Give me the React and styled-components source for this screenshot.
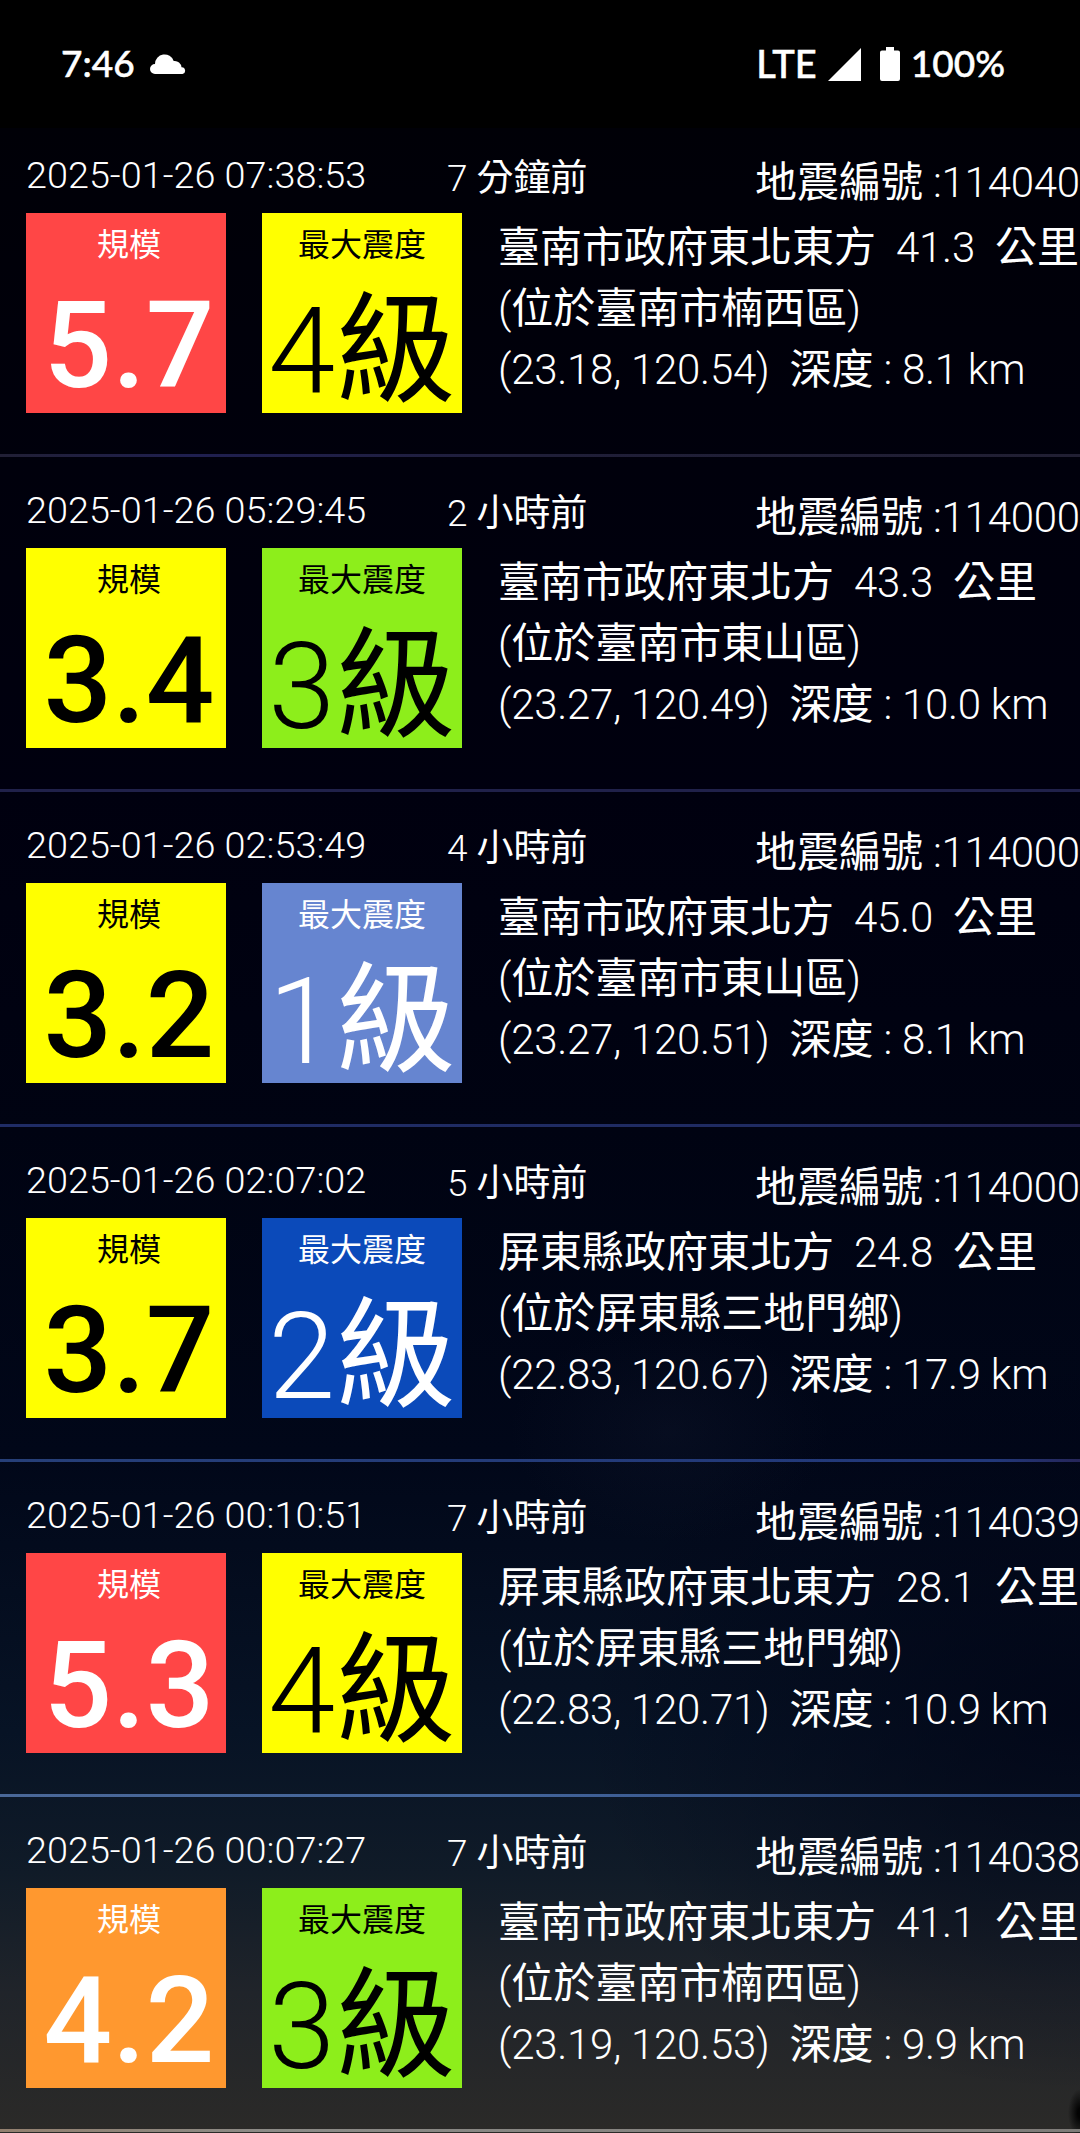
import React from "react";
import styled, { createGlobalStyle } from "styled-components";

const quakes = [
    { time: "2025-01-26 07:38:53", ago: "7 分鐘前", id: "114040", mag: "5.7", magBg: "#ff4646", magColor: "#fff", level: "4級", levelBg: "#ffff00", levelColor: "#000", place: "臺南市政府東北東方  41.3  公里", town: "(位於臺南市楠西區)", coords: "(23.18, 120.54)  深度 : 8.1 km", line: "linear-gradient(90deg, #211f35, #1f1f50 18%, #1f1e38 50%, #211f33)" },
    { time: "2025-01-26 05:29:45", ago: "2 小時前", id: "114000", mag: "3.4", magBg: "#ffff00", magColor: "#000", level: "3級", levelBg: "#8dee1b", levelColor: "#000", place: "臺南市政府東北方  43.3  公里", town: "(位於臺南市東山區)", coords: "(23.27, 120.49)  深度 : 10.0 km", line: "#20214a" },
    { time: "2025-01-26 02:53:49", ago: "4 小時前", id: "114000", mag: "3.2", magBg: "#ffff00", magColor: "#000", level: "1級", levelBg: "#6685d0", levelColor: "#fff", place: "臺南市政府東北方  45.0  公里", town: "(位於臺南市東山區)", coords: "(23.27, 120.51)  深度 : 8.1 km", line: "linear-gradient(90deg, #1f2c66, #1f2b62 70%, #211f4a)" },
    { time: "2025-01-26 02:07:02", ago: "5 小時前", id: "114000", mag: "3.7", magBg: "#ffff00", magColor: "#000", level: "2級", levelBg: "#0b4aba", levelColor: "#fff", place: "屏東縣政府東北方  24.8  公里", town: "(位於屏東縣三地門鄉)", coords: "(22.83, 120.67)  深度 : 17.9 km", line: "linear-gradient(90deg, #263f78, #22387a 92%, #26265a)" },
    { time: "2025-01-26 00:10:51", ago: "7 小時前", id: "114039", mag: "5.3", magBg: "#ff4646", magColor: "#fff", level: "4級", levelBg: "#ffff00", levelColor: "#000", place: "屏東縣政府東北東方  28.1  公里", town: "(位於屏東縣三地門鄉)", coords: "(22.83, 120.71)  深度 : 10.9 km", line: "linear-gradient(90deg, #4a6898, #43659b 45%, #2c4880)" },
    { time: "2025-01-26 00:07:27", ago: "7 小時前", id: "114038", mag: "4.2", magBg: "#ff982f", magColor: "#fff", level: "3級", levelBg: "#8dee1b", levelColor: "#000", place: "臺南市政府東北東方  41.1  公里", town: "(位於臺南市楠西區)", coords: "(23.19, 120.53)  深度 : 9.9 km", line: "linear-gradient(90deg, #93806f, #8c8b87 25%, #7f7c79)" },
];

const GlobalStyle = createGlobalStyle`
    body {
        margin: 0;
        background: #000;
    }
`

const Screen = styled.div`
    width: 1080px;
    height: 2133px;
    overflow: hidden;
    display: flex;
    flex-direction: column;
    background: #000;
    color: #fff;
    font-family: Roboto, "Noto Sans CJK TC", sans-serif;
    font-weight: 300;
`
const StatusBar = styled.div`
    height: 126px;
    flex: none;
    box-sizing: border-box;
    padding: 0 75px 0 61px;
    margin-bottom: 2px;
    display: flex;
    align-items: center;
    font-family: Lato, sans-serif;
    font-size: 37px;
    font-weight: 500;
    line-height: 126px;
    -webkit-text-stroke: 0.5px #fff;
`
const Clock = styled.div`
    width: 89px;
`
const Network = styled.div`
    margin-left: auto;
    margin-right: 11px;
    font-size: 38px;
`
const Icon = styled.svg`
    display: block;
    flex: none;
    fill: #fff;
    margin-top: 2px;
    margin-right: ${props => props.$gap || 0}px;
`
const List = styled.div`
    height: 2005px;
    flex: none;
    background:
        radial-gradient(ellipse 12px 24px at 100% 99%, #030303 20%, transparent),
        radial-gradient(ellipse 500px 380px at 100% 79%, rgba(0, 3, 20, 0.75), transparent),
        radial-gradient(ellipse 160px 110px at 62% 65%, rgba(40, 50, 75, 0.14), transparent),
        linear-gradient(180deg, #000007 0%, #00000c 17%, #00000f 33%, #000312 50%, #010719 66%, #071325 80%, #101b28 87%, #20242a 93%, #2b2a28 100%);
`
const Row = styled.div`
    height: 332px;
    margin-top: ${props => props.$first ? -6 : 0}px;
`
const Divider = styled.div`
    height: 3px;
    background: ${props => props.$line};
`
const Header = styled.div`
    display: flex;
    height: 91px;
    align-items: baseline;
    white-space: pre;
    line-height: 91px;
`
const DateText = styled.div`
    width: 421px;
    margin-left: 26px;
    font-size: 37.8px;
    line-height: 106px;
`
const Ago = styled.div`
    width: 308px;
    font-size: 37px;
    position: relative;
    top: 3px;
`
const Number = styled.div`
    font-size: 42px;
    letter-spacing: -0.25px;
    position: relative;
    top: 9px;
`
const Han = styled.span`
    font-weight: 400;
    letter-spacing: 0;
`
const Body = styled.div`
    display: flex;
    gap: 36px;
    padding-left: 26px;
`
const Tile = styled.div`
    width: 200px;
    height: 200px;
    flex: none;
    background: ${props => props.$bg};
    color: ${props => props.$color};
    text-align: center;
    white-space: nowrap;
`
const TileLabel = styled.div`
    font-size: 32px;
    font-weight: 400;
    line-height: 46px;
    padding-top: 9px;
    padding-left: ${props => props.$indent || 0}px;
`
const Magnitude = styled.div`
    font-size: 120.75px;
    font-weight: 500;
    line-height: 136px;
    padding-top: 10px;
    padding-left: 6px;
`
const Level = styled.div`
    font-size: 120.75px;
    line-height: 124px;
    padding-top: 22px;
`
const Details = styled.div`
    font-size: 42px;
    line-height: 61px;
    letter-spacing: -0.25px;
    padding-top: 4px;
    white-space: pre;
`

// Chinese glyphs are drawn heavier than the thin latin digits
const Mixed = ({ text }) =>
    text.split(/([\u4e00-\u9fff]+)/).map((part, i) => (
        i % 2 ? <Han key={i}>{part}</Han> : part
    ))

const App = () => {
    return (
        <Screen>
            <GlobalStyle />
            <StatusBar>
                <Clock>7:46</Clock>
                <Icon width="36" height="20" viewBox="0 0 36 20">
                    <path d="M5 20A5 5 0 0 1 5 10A9.6 9.6 0 0 1 23.7 7A6.7 6.7 0 0 1 31.5 13.3A3.4 3.4 0 0 1 32.5 20Z" />
                </Icon>
                <Network>LTE</Network>
                <Icon width="33" height="33" viewBox="0 0 33 33" $gap={19}>
                    <path d="M33 0V33H0Z" />
                </Icon>
                <Icon width="20" height="34" viewBox="0 0 20 34" $gap={11}>
                    <path d="M6 0H14V3.5H18Q20 3.5 20 5.5V32Q20 34 18 34H2Q0 34 0 32V5.5Q0 3.5 2 3.5H6Z" />
                </Icon>
                <div>100%</div>
            </StatusBar>
            <List>
                {quakes.map((quake, index) => (
                    <React.Fragment key={quake.time}>
                        <Row $first={index === 0}>
                            <Header>
                                <DateText>{quake.time}</DateText>
                                <Ago><Mixed text={quake.ago} /></Ago>
                                <Number><Mixed text={`地震編號 :${quake.id}`} /></Number>
                            </Header>
                            <Body>
                                <Tile $bg={quake.magBg} $color={quake.magColor}>
                                    <TileLabel $indent={6}>規模</TileLabel>
                                    <Magnitude>{quake.mag}</Magnitude>
                                </Tile>
                                <Tile $bg={quake.levelBg} $color={quake.levelColor}>
                                    <TileLabel>最大震度</TileLabel>
                                    <Level><Mixed text={quake.level} /></Level>
                                </Tile>
                                <Details>
                                    <div><Mixed text={quake.place} /></div>
                                    <div><Mixed text={quake.town} /></div>
                                    <div><Mixed text={quake.coords} /></div>
                                </Details>
                            </Body>
                        </Row>
                        <Divider $line={quake.line} />
                    </React.Fragment>
                ))}
            </List>
        </Screen>
    )
}

export default App;
